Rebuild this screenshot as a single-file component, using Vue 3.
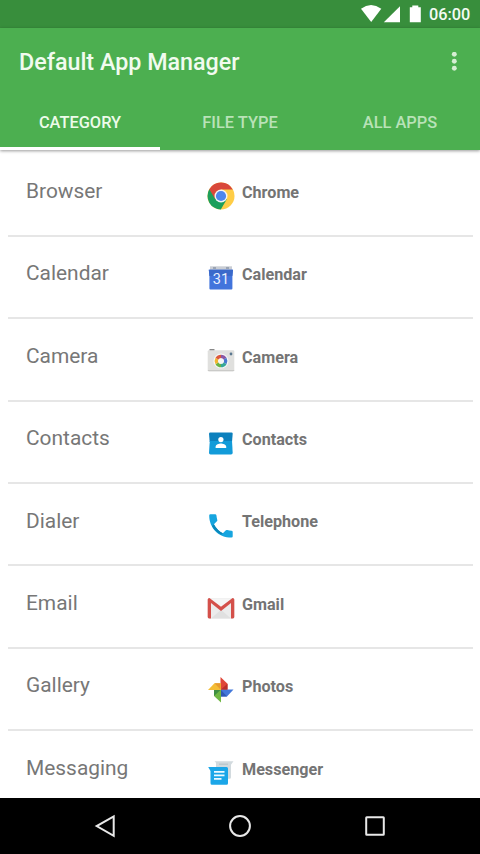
<script setup>
const tabs = ['CATEGORY', 'FILE TYPE', 'ALL APPS']
const rows = [
  { category: 'Browser', app: 'Chrome' },
  { category: 'Calendar', app: 'Calendar' },
  { category: 'Camera', app: 'Camera' },
  { category: 'Contacts', app: 'Contacts' },
  { category: 'Dialer', app: 'Telephone' },
  { category: 'Email', app: 'Gmail' },
  { category: 'Gallery', app: 'Photos' },
  { category: 'Messaging', app: 'Messenger' },
]
</script>

<template>
  <div class="screen">
    <div class="status">
      <svg class="signals" width="62" height="20" viewBox="0 0 62 20">
        <path d="M0 4.800Q10 -2.600 20.300 4.800L10.200 18Z" fill="#fff" />
        <path d="M39 2.200V18.200H22.800Z" fill="#fff" />
        <path d="M48.800 3.200H51.300V1.500H57.300V3.200H59.800V18.200H48.800Z" fill="#fff" />
      </svg>
      <span class="time">06:00</span>
    </div>
    <header class="appbar">
      <div class="toolbar">
        <h1 class="title">Default App Manager</h1>
        <svg class="more" width="6" height="20" viewBox="0 0 6 20">
          <circle cx="3.300" cy="2.300" r="2.450" />
          <circle cx="3.300" cy="9.300" r="2.450" />
          <circle cx="3.300" cy="16.300" r="2.450" />
        </svg>
      </div>
      <nav class="tabs">
        <div v-for="(tab, i) in tabs" :key="tab" class="tab" :class="{ active: i === 0 }">{{ tab }}</div>
      </nav>
    </header>
    <main class="list">
      <div v-for="row in rows" :key="row.category" class="row">
        <span class="category">{{ row.category }}</span>
        <svg class="icon" width="28" height="28" viewBox="0 0 28 28">
          <g v-if="row.app === 'Chrome'">
            <circle cx="14" cy="14" r="13.500" fill="#ffcd46" />
            <path d="M14 14L2.300 7.300A13.500 13.500 0 0 0 13.800 27.500L19.800 17.200Z" fill="#1d9f5b" />
            <path d="M2.300 7.300A13.500 13.500 0 0 1 25.800 7.600H14L8.300 17.200Z" fill="#d9483b" />
            <circle cx="14" cy="14" r="6.500" fill="#f5f5f5" />
            <circle cx="14" cy="14" r="5.100" fill="#4c87ee" />
          </g>
          <g v-else-if="row.app === 'Calendar'">
            <path d="M3 2.300H25V8H3Z" fill="#c9cdd4" />
            <path d="M6 3h3v2h-3zM19 3h3v2h-3z" fill="#9ba4b2" />
            <path d="M1.800 5.700H26L25.400 12V24.500Q25.400 25.500 24.400 25.500H3.400Q2.400 25.500 2.400 24.500V12Z" fill="#4274dc" />
            <path d="M1.800 5.700H26L25.400 12H2.400Z" fill="#3a69ca" />
            <text x="13.900" y="19.900" class="date">31</text>
          </g>
          <g v-else-if="row.app === 'Camera'">
            <rect x="2.500" y="2" width="5" height="2" rx=".5" fill="#888" />
            <rect x=".7" y="3.200" width="26.600" height="21" rx="1.200" fill="#e0e0de" />
            <path d="M.7 23H27.300V23.500Q27 24.200 26 24.200H2Q.7 24.200 .7 23Z" fill="#cacac8" />
            <circle cx="14" cy="14" r="7.600" fill="#f5f5f5" />
            <circle cx="24" cy="7" r="1.400" fill="#5b7890" />
            <g fill="none" stroke-width="3.200" transform="translate(0 -.3)">
              <path d="M14 9.600A4.700 4.700 0 0 1 18.070 11.950" stroke="#8a57a5" />
              <path d="M18.070 11.950A4.700 4.700 0 0 1 18.070 16.650" stroke="#4777cf" />
              <path d="M18.070 16.650A4.700 4.700 0 0 1 14 19" stroke="#35a798" />
              <path d="M14 19A4.700 4.700 0 0 1 9.930 16.650" stroke="#69b345" />
              <path d="M9.930 16.650A4.700 4.700 0 0 1 9.930 11.950" stroke="#f1b52f" />
              <path d="M9.930 11.950A4.700 4.700 0 0 1 14 9.600" stroke="#dc583d" />
            </g>
          </g>
          <g v-else-if="row.app === 'Contacts'">
            <path d="M2 4.700Q2 3.500 3.200 3.500H24.500Q25.700 3.500 25.700 4.700L25 13H2.700Z" fill="#0c80bd" />
            <path d="M2.800 12H25L25.700 23.700Q25.700 25.400 24 25.400H3.600Q2 25.400 2 23.700Z" fill="#129bd9" />
            <circle cx="13.900" cy="10.600" r="2.600" fill="#fff" />
            <path d="M8.600 19V17.700C8.600 15.400 12 14.500 13.900 14.500S19.200 15.400 19.200 17.700V19Z" fill="#fff" />
          </g>
          <g v-else-if="row.app === 'Telephone'">
            <path d="M3.400 2.200H8.200Q9.200 2.200 9.400 3.200Q9.700 5.800 10.300 7.900Q10.500 8.600 9.900 9.200L6.900 12.200Q10.100 18.300 15.900 21.300L18.900 18.300Q19.500 17.700 20.300 18Q22.300 18.600 24.500 18.700Q25.700 18.800 25.700 19.900V24.500Q25.700 25.600 24.500 25.600C11.500 25.600 2.200 15.700 2.200 3.400Q2.200 2.200 3.400 2.200Z" fill="#16a5df" />
            <path d="M6.900 12.200Q10.100 18.300 15.900 21.300L14.200 22.800Q8 19.500 5 14Z" fill="#0a87b9" />
          </g>
          <g v-else-if="row.app === 'Gmail'">
            <rect x=".7" y="3.900" width="26.600" height="20.600" rx="1.500" fill="#ececec" />
            <path d="M4 24.500L14 15.700L24 24.500Z" fill="#e0e0e0" />
            <path d="M3 4.400H25L14 13Z" fill="#f5f5f5" />
            <path d="M.7 5.400Q.7 3.900 2.400 3.900L14 12.800L25.600 3.900Q27.300 3.900 27.300 5.400V23.100Q27.300 24.500 25.900 24.500H24V9.100L14 16.900L4 9.100V24.500H2.100Q.7 24.500 .7 23.100Z" fill="#d4504a" />
          </g>
          <g v-else-if="row.app === 'Photos'">
            <path d="M13.500 1L20.500 7.800V14H13.500Z" fill="#df4638" />
            <path d="M26.500 13.500L20 20.500H13.500V13.500Z" fill="#4378da" />
            <path d="M14 26.500L7 20V13.500H14Z" fill="#70b744" />
            <path d="M1 14L7.500 7.300H14V14Z" fill="#f4bd36" />
            <path d="M20.500 7.800V13.500H14Z" fill="#b9302b" />
            <path d="M20 20.500H14V14Z" fill="#3058b4" />
            <path d="M7 20V14H13.500Z" fill="#3e8e43" />
            <path d="M7.500 7.300H13.500V13.500Z" fill="#e79a2f" />
          </g>
          <g v-else>
            <path d="M7.500 2.200H26.500L24 5.700V18.200Q24 19.700 22.500 19.700H9V3.700Z" fill="#d2dade" />
            <path d="M12 5.200H21" stroke="#b8c4ca" stroke-width="1.200" />
            <path d="M1.200 8H19.500Q21 8 21 9.500V24.200Q21 25.700 19.500 25.700H5Q3.500 25.700 3.500 24.200V11.900Z" fill="#1ba6e8" />
            <path d="M7 12.900H17.500M7 16.400H17.500M7 19.900H14.500" stroke="#eefaff" stroke-width="1.700" />
          </g>
        </svg>
        <span class="app">{{ row.app }}</span>
      </div>
    </main>
    <footer class="navbar">
      <svg width="24" height="24" viewBox="0 0 24 24"><path d="M20.700 2.400V21.800L3.700 12.100Z" /></svg>
      <svg width="24" height="24" viewBox="0 0 24 24"><circle cx="12" cy="12" r="9.900" /></svg>
      <svg width="24" height="24" viewBox="0 0 24 24"><rect x="3.200" y="3.200" width="17.600" height="17.600" rx=".5" /></svg>
    </footer>
  </div>
</template>

<style>
body {
  margin: 0;
}
</style>

<style scoped>
.screen {
  width: 480px;
  height: 854px;
  display: flex;
  flex-direction: column;
  overflow: hidden;
  background: #fff;
  font-family: Roboto, sans-serif;
}
.status {
  height: 28px;
  flex: none;
  display: flex;
  justify-content: flex-end;
  align-items: flex-start;
  padding: 4px 9px 0 0;
  box-sizing: border-box;
  background: #388e3c;
  color: #f3fbf3;
}
.time {
  width: 42px;
  margin-left: 6px;
  font-size: 16.300px;
  font-weight: 500;
  line-height: 22px;
  white-space: nowrap;
}
.appbar {
  height: 122px;
  flex: none;
  position: relative;
  background: #4caf50;
  box-shadow: 0 1px 3px rgba(0, 0, 0, 0.4);
}
.toolbar {
  height: 67px;
  display: flex;
  align-items: center;
  justify-content: space-between;
  padding: 0 23px 0 19px;
}
.title {
  margin: 0;
  color: #f1fbef;
  font-size: 23.300px;
  font-weight: 500;
  line-height: 30px;
}
.more {
  fill: #d5eed3;
}
.tabs {
  height: 55px;
  display: grid;
  grid-template-columns: repeat(3, 1fr);
}
.tab {
  box-sizing: border-box;
  padding-top: 17px;
  text-align: center;
  color: #b9e2b8;
  font-size: 16.400px;
  font-weight: 500;
  line-height: 22px;
}
.active {
  color: #edfbea;
  border-bottom: 3px solid #fff;
}
.list {
  flex: 1;
  min-height: 0;
  overflow: hidden;
  padding: 4.500px 7px 0 8px;
}
.row {
  height: 82.400px;
  box-sizing: border-box;
  display: grid;
  grid-template-columns: 181.500px 34.500px 1fr;
  align-items: start;
  padding-left: 18px;
  border-bottom: 2px solid #e6e6e6;
}
.category {
  padding-top: 22.600px;
  color: #777;
  font-size: 20.900px;
  line-height: 28px;
}
.icon {
  display: block;
  margin: 27.500px 0 0 -0.500px;
}
.date {
  fill: #e9f0ff;
  font-size: 14.500px;
  text-anchor: middle;
}
.app {
  padding-top: 28.300px;
  color: #747474;
  font-size: 16.150px;
  font-weight: 700;
  line-height: 20px;
}
.navbar {
  height: 56px;
  flex: none;
  display: flex;
  justify-content: space-between;
  align-items: center;
  padding: 0 93px;
  background: #000;
}
.navbar svg {
  fill: none;
  stroke: #e8e8e8;
  stroke-width: 2;
}
</style>
